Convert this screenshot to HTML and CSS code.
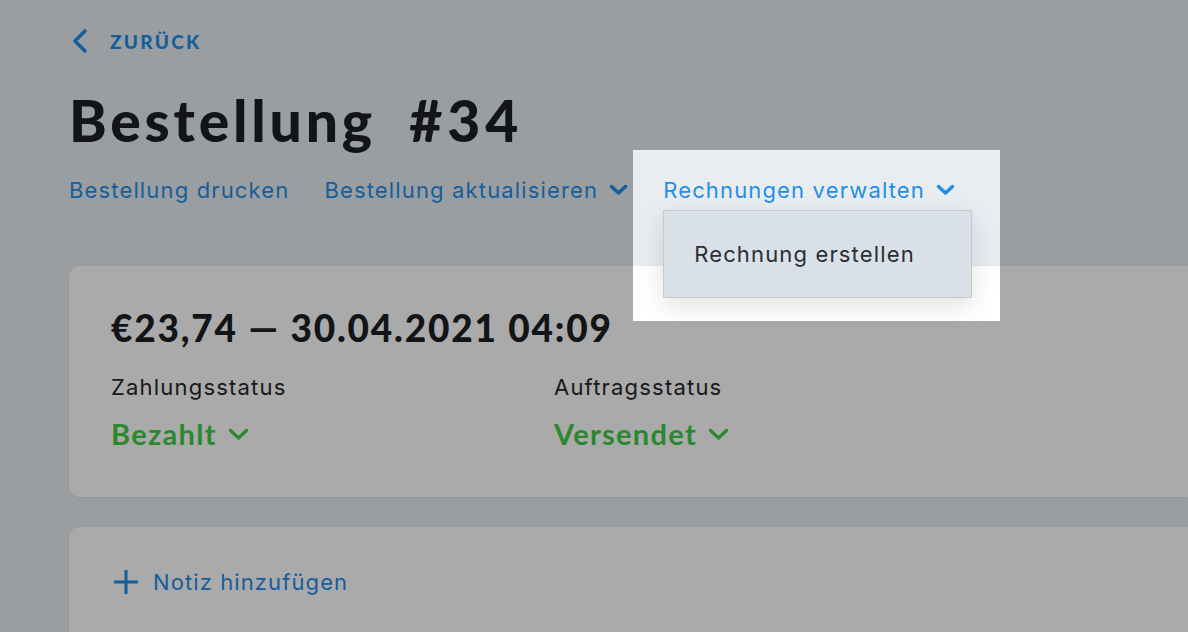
FILE: index.html
```html
<!DOCTYPE html>
<html lang="de">

<head>
    <meta charset="UTF-8">
    <meta name="viewport" content="width=device-width, initial-scale=1.0">
    <title>Bestellung #34</title>

    <link rel="stylesheet" href="styles.css">
</head>

<body>
    <section class="page">
        <a class="back" href="#">
            <svg width="18" height="26" viewBox="0 0 18 26">
                <polyline points="14,3 4,13 14,23" fill="none" stroke="currentColor" stroke-width="3.6" stroke-linecap="round" stroke-linejoin="round" />
            </svg>
            <span>ZURÜCK</span>
        </a>

        <h1 class="title">Bestellung <span class="order-no">#34</span></h1>

        <nav class="actions">
            <a href="#">Bestellung drucken</a>
            <a href="#">Bestellung aktualisieren
                <svg class="chev" width="19" height="12" viewBox="0 0 19 12">
                    <polyline points="2.5,2.5 9.5,9 16.5,2.5" fill="none" stroke="currentColor" stroke-width="3.5" stroke-linecap="round" stroke-linejoin="round" />
                </svg>
            </a>
            <div class="menu-wrap">
                <a href="#" class="active">Rechnungen verwalten
                    <svg class="chev" width="19" height="12" viewBox="0 0 19 12">
                        <polyline points="2.5,2.5 9.5,9 16.5,2.5" fill="none" stroke="currentColor" stroke-width="3.5" stroke-linecap="round" stroke-linejoin="round" />
                    </svg>
                </a>
                <div class="dropdown">
                    <div class="dropdown-item">Rechnung erstellen</div>
                </div>
                <div class="spotlight"></div>
            </div>
        </nav>

        <div class="card summary">
            <h2 class="amount">€23,74 — 30.04.2021 04:09</h2>
            <div class="statuses">
                <div class="status">
                    <div class="status-label">Zahlungsstatus</div>
                    <div class="status-value">Bezahlt
                        <svg width="21" height="13" viewBox="0 0 21 13">
                            <polyline points="2.5,2.5 10.5,10 18.5,2.5" fill="none" stroke="currentColor" stroke-width="3.3" stroke-linecap="round" stroke-linejoin="round" />
                        </svg>
                    </div>
                </div>
                <div class="status">
                    <div class="status-label">Auftragsstatus</div>
                    <div class="status-value">Versendet
                        <svg width="21" height="13" viewBox="0 0 21 13">
                            <polyline points="2.5,2.5 10.5,10 18.5,2.5" fill="none" stroke="currentColor" stroke-width="3.3" stroke-linecap="round" stroke-linejoin="round" />
                        </svg>
                    </div>
                </div>
            </div>
        </div>

        <div class="card note">
            <a href="#" class="add-note">
                <svg width="26" height="26" viewBox="0 0 26 26">
                    <path d="M13 1 V25 M1 13 H25" fill="none" stroke="currentColor" stroke-width="3" />
                </svg>
                <span>Notiz hinzufügen</span>
            </a>
        </div>
    </section>
</body>

</html>
```

FILE: styles.css
```css
body {
    margin: 0;
    height: 632px;
    overflow: hidden;
    background: #e9edf0;
    font-family: Inter, "Liberation Sans", sans-serif;
    color: #24272b;
}

a {
    text-decoration: none;
    color: #1f8eeb;
}

.page {
    padding: 24px 0 0 69px;
}

.back {
    display: flex;
    align-items: center;
    gap: 21px;
    height: 34px;
    padding-left: 2px;
    font-family: Lato, sans-serif;
    font-weight: 900;
    font-size: 19px;
    letter-spacing: 2.3px;
}

.title {
    margin: 28px 0 0;
    font-family: Lato, sans-serif;
    font-weight: 900;
    font-size: 57px;
    line-height: 68px;
    letter-spacing: 3.8px;
    color: #1b1f23;
}

.order-no {
    margin-left: 16px;
    letter-spacing: 5px;
}

.actions {
    display: flex;
    align-items: center;
    gap: 35px;
    margin-top: 16px;
    font-size: 22px;
    line-height: 40px;
    letter-spacing: 1.15px;
}

.actions a {
    display: flex;
    align-items: center;
    gap: 11px;
}

.menu-wrap {
    position: relative;
}

.dropdown {
    position: absolute;
    top: 40px;
    left: 0;
    z-index: 2;
    width: 307px;
    background: #d9e0e8;
    border: 1px solid #c3cad1;
    box-shadow: 0 8px 24px rgba(0, 0, 0, 0.12);
}

.dropdown-item {
    padding: 26px 30px;
    line-height: 34px;
    font-size: 22px;
    letter-spacing: 1.15px;
    color: #2a2d31;
}

.spotlight {
    position: absolute;
    top: -20px;
    left: -30px;
    width: 367px;
    height: 171px;
    z-index: 3;
    pointer-events: none;
    box-shadow: 0 0 0 3000px rgba(0, 0, 0, 0.335);
}

.card {
    background: #fff;
    border-radius: 10px 0 0 10px;
    box-shadow: 0 1px 4px rgba(0, 0, 0, 0.05);
}

.summary {
    margin-top: 56px;
    padding: 40px 0 47px 42px;
}

.amount {
    margin: 0;
    font-family: Lato, sans-serif;
    font-weight: 900;
    font-size: 37px;
    line-height: 44px;
    letter-spacing: 1.8px;
    color: #1b1f23;
}

.statuses {
    display: flex;
    margin-top: 22px;
}

.status {
    width: 443px;
}

.status-label {
    font-size: 22px;
    line-height: 30px;
    letter-spacing: 1.2px;
}

.status-value {
    display: flex;
    align-items: center;
    gap: 11px;
    margin-top: 16px;
    font-family: Lato, sans-serif;
    font-weight: 700;
    font-size: 29px;
    line-height: 32px;
    letter-spacing: 1.3px;
    color: #3fcd46;
}

.note {
    margin-top: 30px;
    height: 120px;
    padding: 38px 0 0 44px;
}

.add-note {
    display: flex;
    align-items: center;
    gap: 14px;
    font-size: 22px;
    line-height: 34px;
    letter-spacing: 1.1px;
}
```
